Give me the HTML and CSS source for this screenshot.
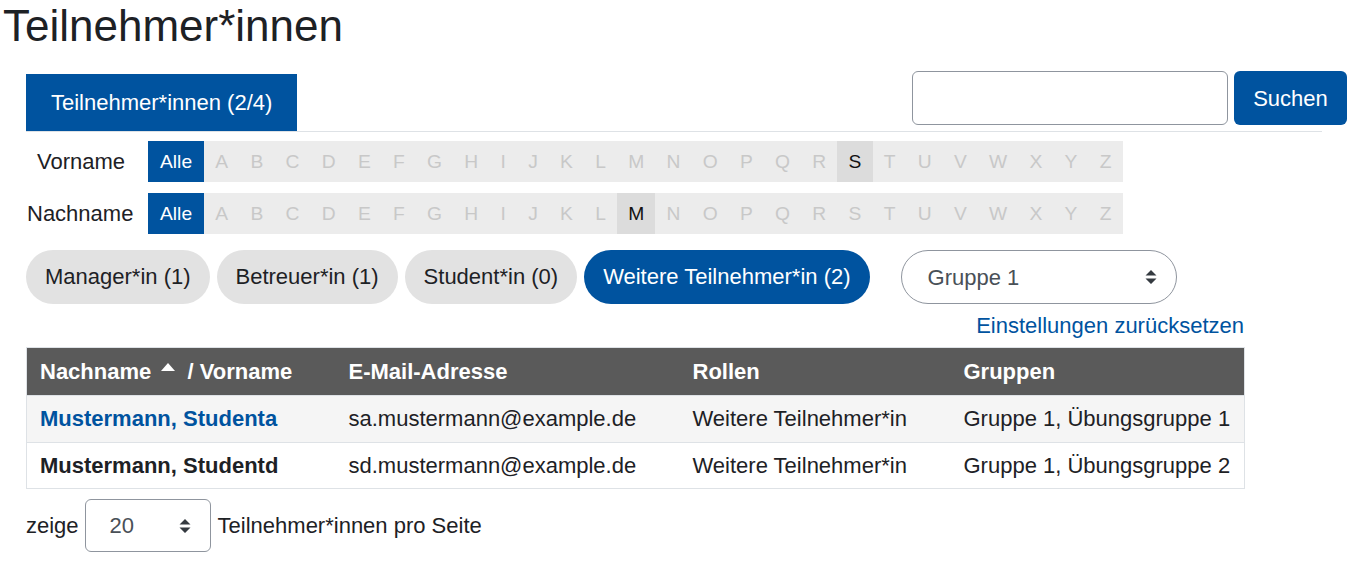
FILE: index.html
```html
<!DOCTYPE html>
<html lang="de">
<head>
<meta charset="utf-8">
<title>Teilnehmer*innen</title>
<link rel="stylesheet" href="styles.css">
</head>
<body>
<h1 class="page-title">Teilnehmer*innen</h1>

<div class="topbar">
  <ul class="tabs">
    <li><a class="tab active" href="#">Teilnehmer*innen (2/4)</a></li>
  </ul>
  <form class="search">
    <input class="search-input" type="text" aria-label="Suchen">
    <button class="btn-primary" type="button">Suchen</button>
  </form>
</div>

<div class="initialbar">
  <span class="ib-label ib-first">Vorname</span>
  <ul class="ib-list">
    <li class="ib-all">Alle</li>
    <li>A</li><li>B</li><li>C</li><li>D</li><li>E</li><li>F</li><li>G</li><li>H</li><li>I</li><li>J</li><li>K</li><li>L</li><li>M</li><li>N</li><li>O</li><li>P</li><li>Q</li><li>R</li><li class="ib-sel">S</li><li>T</li><li>U</li><li>V</li><li>W</li><li>X</li><li>Y</li><li>Z</li>
  </ul>
</div>
<div class="initialbar second">
  <span class="ib-label ib-last">Nachname</span>
  <ul class="ib-list">
    <li class="ib-all">Alle</li>
    <li>A</li><li>B</li><li>C</li><li>D</li><li>E</li><li>F</li><li>G</li><li>H</li><li>I</li><li>J</li><li>K</li><li>L</li><li class="ib-sel">M</li><li>N</li><li>O</li><li>P</li><li>Q</li><li>R</li><li>S</li><li>T</li><li>U</li><li>V</li><li>W</li><li>X</li><li>Y</li><li>Z</li>
  </ul>
</div>

<div class="roles">
  <span class="pill">Manager*in (1)</span>
  <span class="pill">Betreuer*in (1)</span>
  <span class="pill">Student*in (0)</span>
  <span class="pill pill-active">Weitere Teilnehmer*in (2)</span>
  <div class="select select-group">
    <span>Gruppe 1</span>
    <svg class="arrows" width="12" height="16" viewBox="0 0 12 16"><path d="M6 1 L11.5 6.5 L0.5 6.5 Z M6 15 L11.5 9.5 L0.5 9.5 Z" fill="#343a40"/></svg>
  </div>
</div>

<div class="reset-row"><a class="reset" href="#">Einstellungen zurücksetzen</a></div>

<table class="participants">
  <colgroup>
    <col class="c1"><col class="c2"><col class="c3"><col class="c4">
  </colgroup>
  <thead>
    <tr>
      <th>Nachname <svg class="caret" width="14" height="8" viewBox="0 0 14 8"><path d="M0 8 L7 0 L14 8 Z" fill="#fff"/></svg> / Vorname</th>
      <th>E-Mail-Adresse</th>
      <th>Rollen</th>
      <th>Gruppen</th>
    </tr>
  </thead>
  <tbody>
    <tr class="odd">
      <td><a class="name-link" href="#">Mustermann, Studenta</a></td>
      <td>sa.mustermann@example.de</td>
      <td>Weitere Teilnehmer*in</td>
      <td>Gruppe 1, Übungsgruppe 1</td>
    </tr>
    <tr>
      <td><strong>Mustermann, Studentd</strong></td>
      <td>sd.mustermann@example.de</td>
      <td>Weitere Teilnehmer*in</td>
      <td>Gruppe 1, Übungsgruppe 2</td>
    </tr>
  </tbody>
</table>

<div class="perpage">
  <span>zeige</span>
  <div class="select select-small">
    <span>20</span>
    <svg class="arrows" width="12" height="16" viewBox="0 0 12 16"><path d="M6 1 L11.5 6.5 L0.5 6.5 Z M6 15 L11.5 9.5 L0.5 9.5 Z" fill="#343a40"/></svg>
  </div>
  <span>Teilnehmer*innen pro Seite</span>
</div>
</body>
</html>
```

FILE: styles.css
```css
* { box-sizing: border-box; }

body {
  margin: 0;
  font-family: "Liberation Sans", Arial, sans-serif;
  font-size: 22px;
  line-height: 33px;
  color: #1d2125;
  background: #fff;
}

.page-title {
  margin: 0;
  padding-left: 3px;
  font-size: 44px;
  line-height: 52px;
  font-weight: 400;
}

.topbar {
  display: grid;
  grid-template-columns: 1fr 25px;
  margin-top: 19px;
  padding-left: 26px;
  padding-right: 9px;
}

.tabs {
  grid-area: 1 / 1 / 2 / 2;
  list-style: none;
  margin: 0;
  padding: 3px 0 0 0;
  display: flex;
  border-bottom: 1px solid #dee2e6;
  align-self: start;
}

.tab {
  display: block;
  height: 57px;
  line-height: 57px;
  padding: 0 25px;
  color: #fff;
  text-decoration: none;
}

.tab.active { background: #00539f; }

.search {
  grid-area: 1 / 1 / 2 / 3;
  justify-self: end;
  align-self: start;
  display: flex;
  gap: 6px;
  margin: 0;
}

.search-input {
  width: 316px;
  height: 54px;
  border: 1px solid #8f959e;
  border-radius: 6px;
  font: inherit;
}

.btn-primary {
  height: 54px;
  width: 113px;
  border: 0;
  border-radius: 6px;
  background: #00539f;
  color: #fff;
  font: inherit;
  padding: 0;
}

.initialbar {
  display: flex;
  align-items: center;
  margin-top: 9px;
  padding-left: 26px;
}

.initialbar.second { margin-top: 11px; }

.ib-label {
  width: 122px;
  flex: none;
}

.ib-first { padding-left: 11px; }
.ib-last { padding-left: 1px; }

.ib-list {
  list-style: none;
  margin: 0;
  padding: 0;
  display: flex;
  background: #ececec;
  font-size: 19.25px;
  line-height: 29px;
}

.ib-list li {
  padding: 6px 11.15px;
  color: #c8c8c8;
}

.ib-list li.ib-all {
  background: #00539f;
  color: #fff;
  padding: 6px 12px;
}

.ib-list li.ib-sel {
  background: #dcdcdc;
  color: #111;
}

.roles {
  display: flex;
  align-items: center;
  gap: 7px;
  margin-top: 16px;
  padding-left: 26px;
}

.pill {
  height: 54px;
  line-height: 54px;
  padding: 0 19px;
  border-radius: 27px;
  background: #e2e2e2;
  color: #1d2125;
}

.pill-active {
  background: #00539f;
  color: #fff;
}

.select {
  display: flex;
  align-items: center;
  justify-content: space-between;
  border: 1px solid #8f959e;
  color: #495057;
}

.select-group {
  margin-left: 24px;
  width: 276px;
  height: 54px;
  border-radius: 27px;
  padding: 0 19px 0 26px;
}

.reset-row {
  width: 1244px;
  text-align: right;
  margin-top: 5px;
}

.reset {
  color: #00539f;
  text-decoration: none;
}

.participants {
  margin: 5px 0 0 26px;
  width: 1218px;
  border-collapse: collapse;
  border: 1px solid #dee2e6;
  table-layout: fixed;
}

.c1 { width: 309px; }
.c2 { width: 344px; }
.c3 { width: 271px; }
.c4 { width: 294px; }

.participants th,
.participants td {
  padding: 7px 13px;
  text-align: left;
  white-space: nowrap;
}

.participants th {
  background: #5a5a5a;
  color: #fff;
  font-weight: 700;
}

.participants td {
  padding: 6px 13px 6.5px;
  border-top: 1px solid #dee2e6;
}

.participants tr.odd td { background: #f5f5f5; }

.caret {
  vertical-align: 8px;
  margin: 0 6px 0 4px;
}

.name-link {
  color: #00539f;
  font-weight: 700;
  text-decoration: none;
}

.perpage {
  display: flex;
  align-items: center;
  gap: 6px;
  margin-top: 10px;
  padding-left: 26px;
}

.select-small {
  width: 126px;
  height: 53px;
  border-radius: 6px;
  padding: 0 19px 0 24px;
  margin-right: 1px;
}
```
